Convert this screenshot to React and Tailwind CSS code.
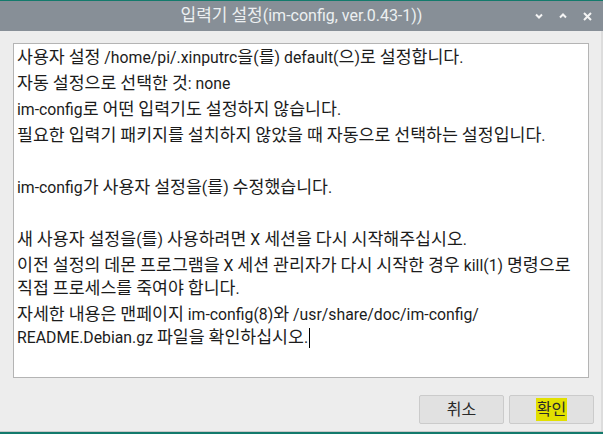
import React from "react";

const font = { fontFamily: "Roboto, 'Noto Sans CJK KR', sans-serif" };

function K({ text, big = "text-[17.3px]" }) {
  const parts = text.split(/([\uAC00-\uD7A3]+)/);
  return (
    <>
      {parts.map((p, i) =>
        /[\uAC00-\uD7A3]/.test(p) ? (
          <span key={i} className={big}>{p}</span>
        ) : (
          <span key={i}>{p}</span>
        )
      )}
    </>
  );
}

function Para({ text }) {
  return (
    <div className="whitespace-pre h-[23px] leading-[23px] mb-[3px]">
      {text ? <K text={text} /> : "\u00a0"}
    </div>
  );
}

export default function App() {
  return (
    <div className="w-[603px] h-[434px] flex flex-col bg-[#ededed] border-t border-b-2 border-[#137a6c] overflow-hidden" style={font}>
      <div className="relative h-[30px] bg-[#878f97] flex items-center justify-center shrink-0">
        <span className="text-[16px] text-[#eceff1] whitespace-pre"><K text="입력기 설정(im-config, ver.0.43-1))" big="text-[17px]" /></span>
        <div className="absolute right-[11px] top-0 h-full flex items-center gap-[16px]">
          <svg width="8" height="8" viewBox="0 0 8 8"><path d="M1 2.5 L4 5.5 L7 2.5" stroke="#f4f4f4" strokeWidth="2" fill="none" /></svg>
          <svg width="8" height="8" viewBox="0 0 8 8"><path d="M1 5.5 L4 2.5 L7 5.5" stroke="#f4f4f4" strokeWidth="2" fill="none" /></svg>
          <svg width="9" height="9" viewBox="0 0 9 9"><path d="M1 1 L8 8 M8 1 L1 8" stroke="#f4f4f4" strokeWidth="2" fill="none" /></svg>
        </div>
      </div>
      <div className="flex-1 flex flex-col border-r-2 border-[#dcdcdc] pl-[13px] pr-[12px] pt-[12px]">
        <div className="h-[335px] bg-white border border-[#b4b4b4] pl-[3px] pt-[2px] text-[15.8px] text-[#1c1c1c]">
          <Para text="사용자 설정 /home/pi/.xinputrc을(를) default(으)로 설정합니다." />
          <Para text="자동 설정으로 선택한 것: none" />
          <Para text="im-config로 어떤 입력기도 설정하지 않습니다." />
          <Para text="필요한 입력기 패키지를 설치하지 않았을 때 자동으로 선택하는 설정입니다." />
          <Para text="" />
          <Para text="im-config가 사용자 설정을(를) 수정했습니다." />
          <Para text="" />
          <Para text="새 사용자 설정을(를) 사용하려면 X 세션을 다시 시작해주십시오." />
          <div className="mb-[3px] leading-[23px] whitespace-pre">
            <div className="h-[23px]"><K text="이전 설정의 데몬 프로그램을 X 세션 관리자가 다시 시작한 경우 kill(1) 명령으로" /></div>
            <div className="h-[23px]"><K text="직접 프로세스를 죽여야 합니다." /></div>
          </div>
          <div className="leading-[23px] whitespace-pre">
            <div className="h-[23px]"><K text="자세한 내용은 맨페이지 im-config(8)와 /usr/share/doc/im-config/" /></div>
            <div className="h-[23px]"><K text="README.Debian.gz 파일을 확인하십시오." /><span className="inline-block w-px h-[20px] bg-black ml-[1px] align-[-5px]" /></div>
          </div>
        </div>
        <div className="flex justify-end gap-[5px] mt-[17px] mr-[-5px]">
          <button className="w-[85px] h-[29px] bg-[#e1e1e1] border border-[#cbcbcb] rounded-[2px] text-[16px] text-[#2a2a2a] flex items-center justify-center">취소</button>
          <button className="w-[85px] h-[29px] bg-[#e1e1e1] border border-[#cbcbcb] rounded-[2px] text-[16px] text-[#2a2a2a] flex items-center justify-center">
            <span className="bg-[#e2e000] px-[1px] leading-[23px]">확인</span>
          </button>
        </div>
      </div>
      <div className="h-px bg-[#c8c8c8] shrink-0" />
    </div>
  );
}
